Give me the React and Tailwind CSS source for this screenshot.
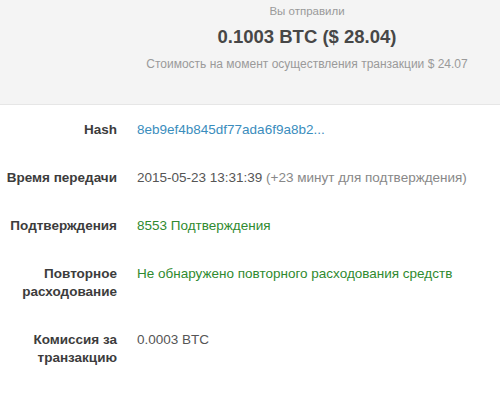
export default function App() {
  const rows = [
    { label: 'Hash', value: '8eb9ef4b845df77ada6f9a8b2...', cls: 'text-[#3a8dbd]' },
    {
      label: 'Время передачи',
      value: (
        <>
          2015-05-23 13:31:39 <span className="text-[#888]">(+23 минут для подтверждения)</span>
        </>
      ),
      cls: 'text-[#555]',
    },
    { label: 'Подтверждения', value: '8553 Подтверждения', cls: 'text-[#2f8a2f]' },
    { label: 'Повторное расходование', value: 'Не обнаружено повторного расходования средств', cls: 'text-[#2f8a2f]' },
    { label: 'Комиссия за транзакцию', value: '0.0003 BTC', cls: 'text-[#555]' },
  ];

  return (
    <div className="w-[500px] h-[412px] bg-white overflow-hidden" style={{ fontFamily: '"Liberation Sans", Arial, sans-serif' }}>
      <div className="h-[105px] bg-[#f4f4f4] border-b border-[#e6e6e6] pl-[114px] pt-[2px] flex flex-col items-center">
        <div className="text-[11.5px] leading-[18px] text-[#9a9a9a]">Вы отправили</div>
        <div className="mt-[6px] text-[18.5px] leading-[22px] font-bold text-[#474747]">0.1003 BTC ($ 28.04)</div>
        <div className="mt-[7px] text-[12px] leading-[18px] text-[#9a9a9a]">Стоимость на момент осуществления транзакции $ 24.07</div>
      </div>
      <div className="pt-[1px]">
        {rows.map((r) => (
          <div key={r.label} className="flex py-[15px] text-[13.5px] leading-[18px]">
            <div className="w-[117px] shrink-0 text-right font-bold text-[#3c3c3c]">{r.label}</div>
            <div className={`pl-[20px] ${r.cls}`}>{r.value}</div>
          </div>
        ))}
      </div>
    </div>
  );
}
